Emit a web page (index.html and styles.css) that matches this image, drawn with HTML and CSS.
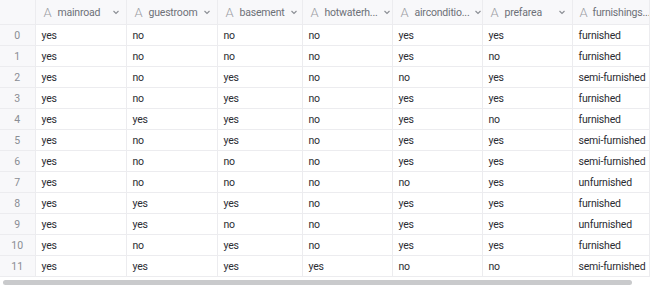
FILE: index.html
```html
<!DOCTYPE html>
<html>
<head>
<meta charset="utf-8">
<link rel="stylesheet" href="styles.css">
</head>
<body>
<div class="frame">
  <table class="grid">
    <colgroup>
      <col class="c-idx"><col class="c-a"><col class="c-a"><col class="c-b"><col class="c-c"><col class="c-c"><col class="c-c"><col class="c-last">
    </colgroup>
    <thead>
      <tr>
        <th class="idx"></th>
        <th><div class="hd"><span class="ty">A</span><span class="nm">mainroad</span><svg class="chev" viewBox="0 0 10 10"><path d="M2.5 4 L5 6.5 L7.5 4"/></svg></div></th>
        <th><div class="hd"><span class="ty">A</span><span class="nm">guestroom</span><svg class="chev" viewBox="0 0 10 10"><path d="M2.5 4 L5 6.5 L7.5 4"/></svg></div></th>
        <th><div class="hd"><span class="ty">A</span><span class="nm">basement</span><svg class="chev" viewBox="0 0 10 10"><path d="M2.5 4 L5 6.5 L7.5 4"/></svg></div></th>
        <th><div class="hd"><span class="ty">A</span><span class="nm">hotwaterh...</span><svg class="chev" viewBox="0 0 10 10"><path d="M2.5 4 L5 6.5 L7.5 4"/></svg></div></th>
        <th><div class="hd"><span class="ty">A</span><span class="nm">airconditio...</span><svg class="chev" viewBox="0 0 10 10"><path d="M2.5 4 L5 6.5 L7.5 4"/></svg></div></th>
        <th><div class="hd"><span class="ty">A</span><span class="nm">prefarea</span><svg class="chev" viewBox="0 0 10 10"><path d="M2.5 4 L5 6.5 L7.5 4"/></svg></div></th>
        <th class="lasth"><div class="hd"><span class="ty">A</span><span class="nm">furnishings...</span></div></th>
      </tr>
    </thead>
    <tbody>
      <tr><td class="idx">0</td><td>yes</td><td>no</td><td>no</td><td>no</td><td>yes</td><td>yes</td><td>furnished</td></tr>
      <tr><td class="idx">1</td><td>yes</td><td>no</td><td>no</td><td>no</td><td>yes</td><td>no</td><td>furnished</td></tr>
      <tr><td class="idx">2</td><td>yes</td><td>no</td><td>yes</td><td>no</td><td>no</td><td>yes</td><td>semi-furnished</td></tr>
      <tr><td class="idx">3</td><td>yes</td><td>no</td><td>yes</td><td>no</td><td>yes</td><td>yes</td><td>furnished</td></tr>
      <tr><td class="idx">4</td><td>yes</td><td>yes</td><td>yes</td><td>no</td><td>yes</td><td>no</td><td>furnished</td></tr>
      <tr><td class="idx">5</td><td>yes</td><td>no</td><td>yes</td><td>no</td><td>yes</td><td>yes</td><td>semi-furnished</td></tr>
      <tr><td class="idx">6</td><td>yes</td><td>no</td><td>no</td><td>no</td><td>yes</td><td>yes</td><td>semi-furnished</td></tr>
      <tr><td class="idx">7</td><td>yes</td><td>no</td><td>no</td><td>no</td><td>no</td><td>yes</td><td>unfurnished</td></tr>
      <tr><td class="idx">8</td><td>yes</td><td>yes</td><td>yes</td><td>no</td><td>yes</td><td>yes</td><td>furnished</td></tr>
      <tr><td class="idx">9</td><td>yes</td><td>yes</td><td>no</td><td>no</td><td>yes</td><td>yes</td><td>unfurnished</td></tr>
      <tr><td class="idx">10</td><td>yes</td><td>no</td><td>yes</td><td>no</td><td>yes</td><td>yes</td><td>furnished</td></tr>
      <tr><td class="idx">11</td><td>yes</td><td>yes</td><td>yes</td><td>yes</td><td>no</td><td>no</td><td>semi-furnished</td></tr>
    </tbody>
  </table>
  <div class="scroll"><div class="thumb"></div></div>
</div>
</body>
</html>
```
FILE: styles.css
```css
html, body {
  margin: 0;
  padding: 0;
  background: #ffffff;
}
.frame {
  width: 650px;
  height: 288px;
  overflow: hidden;
  font-family: "Roboto", "Noto Sans", sans-serif;
  font-size: 10.5px;
  letter-spacing: -0.2px;
  color: #2b2d33;
}
.grid {
  border-collapse: collapse;
  table-layout: fixed;
  width: 649px;
}
.c-idx { width: 35px; }
.c-a { width: 91px; }
.c-b { width: 85px; }
.c-c { width: 90px; }
.c-last { width: 77px; }
th, td {
  border: 1px solid #ececef;
  padding: 0 0 0 6px;
  white-space: nowrap;
  overflow: hidden;
  text-align: left;
}
th {
  height: 24px;
  background: #f8f8fa;
  border-top: none;
  font-weight: 400;
  color: #6d7078;
  padding-left: 8px;
}
.lasth {
  padding-left: 7px;
}
.lasth .hd {
  gap: 3px;
  padding-right: 0;
}
td {
  height: 20px;
  background: #ffffff;
}
.idx {
  background: #f8f8fa;
  color: #8a8d94;
  text-align: center;
  padding: 0;
  border-left: none;
  letter-spacing: 0;
}
.hd {
  display: flex;
  align-items: center;
  gap: 4px;
  padding-right: 5px;
}
.ty {
  font-size: 13px;
  font-weight: 300;
  color: #9a9da4;
  width: 10px;
  flex: none;
}
.nm {
  flex: 0 1 auto;
}
.chev {
  width: 10px;
  height: 10px;
  flex: none;
  margin-left: auto;
  fill: none;
  stroke: #8a8d94;
  stroke-width: 1.1;
}
.scroll {
  height: 11px;
  display: flex;
  align-items: center;
  padding-left: 3px;
}
.thumb {
  width: 629px;
  height: 5px;
  border-radius: 3px;
  background: #c9cacc;
}
```
